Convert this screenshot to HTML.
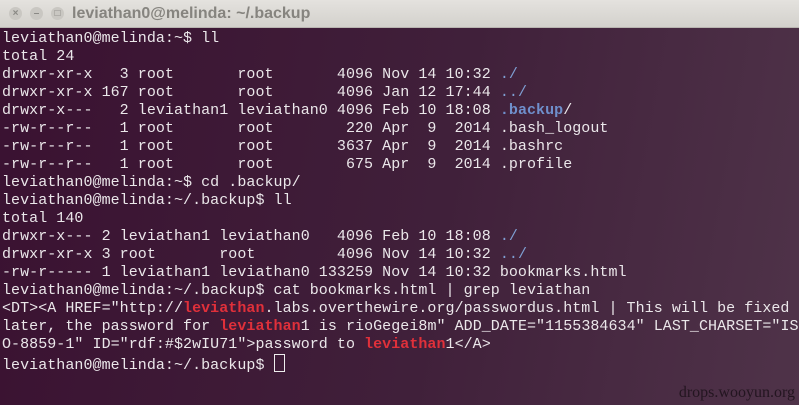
<!DOCTYPE html>
<html><head><meta charset="utf-8"><style>
html,body{margin:0;padding:0;width:799px;height:405px;overflow:hidden}
body{background:linear-gradient(100deg,#3a1131 0%,#40203a 55%,#4f3349 100%);position:relative;font-family:"Liberation Mono",monospace}
.tb{position:absolute;left:0;top:0;width:799px;height:27px;background:linear-gradient(#e4e2de,#d3d1cc);border-bottom:1px solid #b8b5b0}
.btn{position:absolute;top:7px;width:13px;height:13px;border-radius:50%;background:#c9c7c2;color:#8a8985;font:bold 10px/13px "Liberation Sans",sans-serif;text-align:center}
.title{position:absolute;left:72px;top:4px;font:bold 16px/20px "Liberation Sans",sans-serif;color:#86847f}
pre{position:absolute;left:2px;top:30px;margin:0;font-family:"Liberation Mono",monospace;font-size:15px;line-height:18px;color:#ebe7ea;letter-spacing:0.05px;white-space:pre}
.b{color:#7f9fd3}.bb{color:#6f8fcc;font-weight:bold}.r{color:#e0303a;font-weight:bold}
.cur{display:inline-block;width:9px;height:16px;border:1px solid #eee;vertical-align:-3px}
.wm{position:absolute;right:4px;bottom:3px;font:16px "Liberation Serif",serif;color:#231520}
</style></head><body>
<div class="tb"><div class="btn" style="left:9px">×</div><div class="btn" style="left:30px">–</div><div class="btn" style="left:51px">□</div><div class="title">leviathan0@melinda: ~/.backup</div></div>
<pre>leviathan0@melinda:~$ ll
total 24
drwxr-xr-x   3 root       root       4096 Nov 14 10:32 <span class="b">./</span>
drwxr-xr-x 167 root       root       4096 Jan 12 17:44 <span class="b">../</span>
drwxr-x---   2 leviathan1 leviathan0 4096 Feb 10 18:08 <span class="bb">.backup</span>/
-rw-r--r--   1 root       root        220 Apr  9  2014 .bash_logout
-rw-r--r--   1 root       root       3637 Apr  9  2014 .bashrc
-rw-r--r--   1 root       root        675 Apr  9  2014 .profile
leviathan0@melinda:~$ cd .backup/
leviathan0@melinda:~/.backup$ ll
total 140
drwxr-x--- 2 leviathan1 leviathan0   4096 Feb 10 18:08 <span class="b">./</span>
drwxr-xr-x 3 root       root         4096 Nov 14 10:32 <span class="b">../</span>
-rw-r----- 1 leviathan1 leviathan0 133259 Nov 14 10:32 bookmarks.html
leviathan0@melinda:~/.backup$ cat bookmarks.html | grep leviathan
&lt;DT&gt;&lt;A HREF="http://<span class="r">leviathan</span>.labs.overthewire.org/passwordus.html | This will be fixed
later, the password for <span class="r">leviathan</span>1 is rioGegei8m" ADD_DATE="1155384634" LAST_CHARSET="IS
O-8859-1" ID="rdf:#$2wIU71"&gt;password to <span class="r">leviathan</span>1&lt;/A&gt;
leviathan0@melinda:~/.backup$ <span class="cur"></span></pre>
<div class="wm">drops.wooyun.org</div>
</body></html>
